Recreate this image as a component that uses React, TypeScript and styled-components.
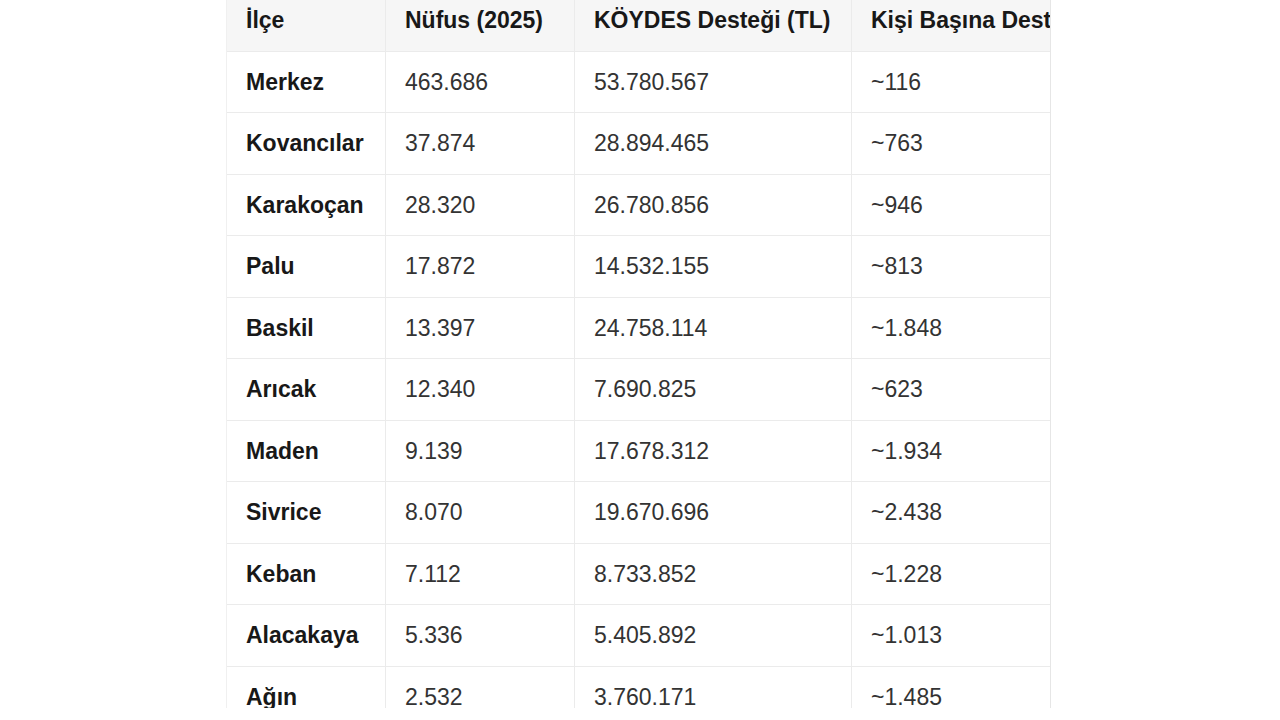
import React from "react";
import styled, { createGlobalStyle } from "styled-components";

interface District {
  name: string;
  population: string;
  support: string;
  perCapita: string;
}

const districts: District[] = [
  { name: "Merkez", population: "463.686", support: "53.780.567", perCapita: "~116" },
  { name: "Kovancılar", population: "37.874", support: "28.894.465", perCapita: "~763" },
  { name: "Karakoçan", population: "28.320", support: "26.780.856", perCapita: "~946" },
  { name: "Palu", population: "17.872", support: "14.532.155", perCapita: "~813" },
  { name: "Baskil", population: "13.397", support: "24.758.114", perCapita: "~1.848" },
  { name: "Arıcak", population: "12.340", support: "7.690.825", perCapita: "~623" },
  { name: "Maden", population: "9.139", support: "17.678.312", perCapita: "~1.934" },
  { name: "Sivrice", population: "8.070", support: "19.670.696", perCapita: "~2.438" },
  { name: "Keban", population: "7.112", support: "8.733.852", perCapita: "~1.228" },
  { name: "Alacakaya", population: "5.336", support: "5.405.892", perCapita: "~1.013" },
  { name: "Ağın", population: "2.532", support: "3.760.171", perCapita: "~1.485" },
];

export default function App() {
  return (
    <>
      <GlobalStyle />
      <Frame>
        <Table>
          <Row header>
            <Cell bold>İlçe</Cell>
            <Cell bold>Nüfus (2025)</Cell>
            <Cell bold>KÖYDES Desteği (TL)</Cell>
            <Cell bold>Kişi Başına Destek (TL)</Cell>
          </Row>
          {districts.map((d) => (
            <Row key={d.name}>
              <Cell bold>{d.name}</Cell>
              <Cell>{d.population}</Cell>
              <Cell>{d.support}</Cell>
              <Cell>{d.perCapita}</Cell>
            </Row>
          ))}
        </Table>
      </Frame>
    </>
  );
}

const GlobalStyle = createGlobalStyle`
  html, body {
    margin: 0;
    padding: 0;
    background: #ffffff;
    font-family: "Liberation Sans", Arial, sans-serif;
  }
`;

const Frame = styled.div`
  width: 825px;
  height: 708px;
  margin-left: 226px;
  overflow: hidden;
  background: #ffffff;
`;

const Table = styled.div`
  display: flex;
  flex-direction: column;
  margin-top: -10px;
  border-left: 1px solid #f0f0f0;
  border-right: 1px solid #e6e6e6;
`;

const Row = styled.div<{ header?: boolean }>`
  display: grid;
  grid-template-columns: 159px 189px 277px 1fr;
  height: 61.5px;
  box-sizing: border-box;
  border-bottom: 1px solid #ebebeb;
  background: ${(p) => (p.header ? "#f6f6f6" : "#ffffff")};
`;

const Cell = styled.div<{ bold?: boolean }>`
  display: flex;
  align-items: center;
  padding: 1px 0 0 19px;
  white-space: nowrap;
  overflow: hidden;
  font-size: 23px;
  font-weight: ${(p) => (p.bold ? 700 : 400)};
  color: ${(p) => (p.bold ? "#181818" : "#333333")};
  border-right: 1px solid #ebebeb;

  &:last-child {
    border-right: none;
  }
`;
